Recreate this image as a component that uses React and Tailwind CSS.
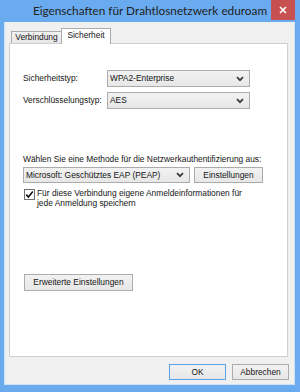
function Chevron() {
  return (
    <svg width="8" height="6" viewBox="0 0 8 6" className="shrink-0">
      <path d="M1 1.2 L4 4.2 L7 1.2" fill="none" stroke="#3a3a3a" strokeWidth="1.7" />
    </svg>
  );
}

function Select({ className, text }) {
  return (
    <div
      className={`flex items-center justify-between border border-[#acacac] bg-gradient-to-b from-[#f2f2f2] to-[#e7e7e7] pl-[2px] pr-[5px] ${className}`}
    >
      <span className="leading-none">{text}</span>
      <Chevron />
    </div>
  );
}

function Button({ className, children }) {
  return (
    <div
      className={`flex items-center justify-center border bg-gradient-to-b from-[#f2f2f2] to-[#e7e7e7] leading-none ${className}`}
    >
      {children}
    </div>
  );
}

export default function App() {
  return (
    <div className="w-[300px] h-[392px] bg-[#6aabf0] flex flex-col overflow-hidden font-['Liberation_Sans',Arial,sans-serif] text-[8.4px] text-[#151515]">
      <div className="relative h-[22px] flex items-center justify-center shrink-0">
        <span className="font-['Lato',sans-serif] text-[11.8px] text-[#222] leading-none pb-[1px] whitespace-nowrap">
          Eigenschaften für Drahtlosnetzwerk eduroam
        </span>
        <div className="absolute top-0 right-[5px] w-[24px] h-[20px] bg-[#c75050] flex items-center justify-center">
          <svg width="8" height="8" viewBox="0 0 8 8">
            <path d="M1 1 L7 7 M7 1 L1 7" stroke="#fff" strokeWidth="1.7" />
          </svg>
        </div>
      </div>

      <div className="ml-[4px] w-[291px] h-[363px] bg-[#f0f0f0] border border-t-0 border-[#cfe1f4] flex flex-col shrink-0">
        <div className="mt-[6px] ml-[6px] h-[15px] flex items-end">
          <div className="w-[51px] h-[12px] border border-b-0 border-[#acacac] bg-gradient-to-b from-[#f2f2f2] to-[#e7e7e7] flex items-center justify-center leading-none">
            Verbindung
          </div>
          <div className="relative z-10 -ml-[1px] -mb-[1px] w-[50px] h-[16px] border border-b-0 border-[#acacac] bg-white flex items-center justify-center leading-none pb-[2px]">
            Sicherheit
          </div>
        </div>

        <div className="ml-[4px] w-[279px] h-[314px] bg-white border border-[#cfcfcf] pl-[13px] pt-[26px] flex flex-col">
          <div className="flex items-center h-[17px]">
            <span className="w-[84px]">Sicherheitstyp:</span>
            <Select className="w-[143px] h-[17px]" text="WPA2-Enterprise" />
          </div>
          <div className="mt-[5px] flex items-center h-[17px]">
            <span className="w-[84px]">Verschlüsselungstyp:</span>
            <Select className="w-[143px] h-[17px]" text="AES" />
          </div>

          <div className="mt-[44px] h-[12px] leading-[12px] whitespace-nowrap">
            Wählen Sie eine Methode für die Netzwerkauthentifizierung aus:
          </div>
          <div className="mt-[2px] flex items-center h-[16px]">
            <Select className="w-[167px] h-[16px]" text="Microsoft: Geschütztes EAP (PEAP)" />
            <Button className="ml-[4px] w-[69px] h-[16px] border-[#acacac]">Einstellungen</Button>
          </div>

          <div className="mt-[5px] flex items-start">
            <div className="ml-[1px] mt-[1px] w-[11px] h-[11px] border border-[#707070] bg-white flex items-center justify-center shrink-0">
              <svg width="9" height="9" viewBox="0 0 9 9">
                <path d="M1.2 4.6 L3.4 7 L7.8 1.6" fill="none" stroke="#111" strokeWidth="1.6" />
              </svg>
            </div>
            <div className="ml-[2px] leading-[10px]">
              Für diese Verbindung eigene Anmeldeinformationen für
              <br />
              jede Anmeldung speichern
            </div>
          </div>

          <Button className="mt-[66px] ml-[1px] w-[109px] h-[17px] border-[#acacac]">
            Erweiterte Einstellungen
          </Button>
        </div>

        <div className="mt-[7px] ml-[4px] w-[280px] flex justify-end gap-[6px]">
          <Button className="w-[57px] h-[16px] border-[#5aa2ea]">OK</Button>
          <Button className="w-[57px] h-[16px] border-[#acacac]">Abbrechen</Button>
        </div>
      </div>
    </div>
  );
}
